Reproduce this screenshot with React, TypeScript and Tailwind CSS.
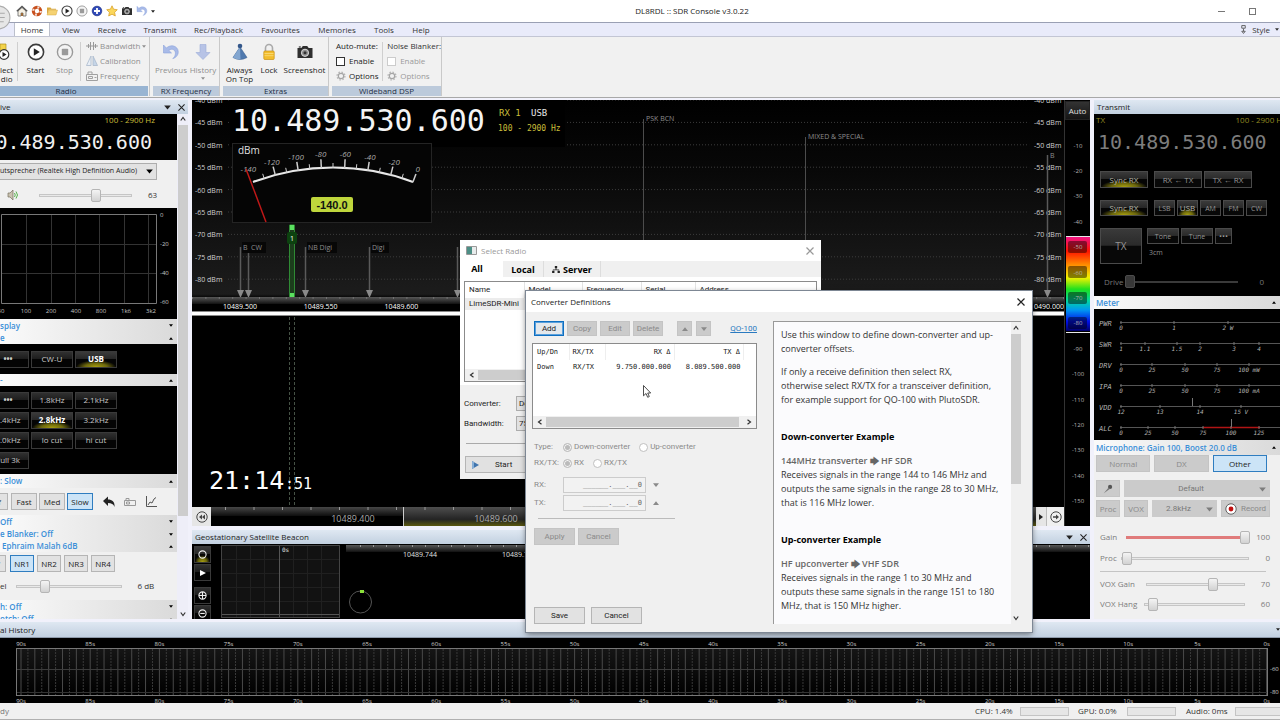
import React from "react";
import clsx from "clsx";

const sans = "[font-family:'Open_Sans','Noto_Sans',sans-serif]";
const narrow = "[font-family:Roboto,'Noto_Sans',sans-serif]";
const mono = "[font-family:'DejaVu_Sans_Mono','Liberation_Mono',monospace]";

/* ---------- icons ---------- */

const HouseIcon = () => (
    <svg viewBox="0 0 12 12" className="size-3">
        <path d="M2 6v5h3V8h2v3h3V6L6 2.5z" fill="#f6f1e4" stroke="#666" strokeWidth=".8" />
        <path d="M.8 6.3 6 1.4l5.2 4.9" fill="none" stroke="#555" strokeWidth="1.4" />
        <path d="M5 8h2v3H5z" fill="#9a6a3a" />
    </svg>
);

const BuoyIcon = () => (
    <svg viewBox="0 0 12 12" className="size-3">
        <circle cx="6" cy="6" r="3.7" fill="none" stroke="#c8501e" strokeWidth="3" />
        <circle cx="6" cy="6" r="3.7" fill="none" stroke="#f3e3da" strokeWidth="2.2" strokeDasharray="1.8 4" />
    </svg>
);

const FolderIcon = () => (
    <svg viewBox="0 0 12 12" className="size-3">
        <path d="M1 2.5h3.5l1 1.2H10v1H3L1 10z" fill="#d9a93f" />
        <path d="M3 5h8.5L10 10H1z" fill="#f5d272" stroke="#d6a848" strokeWidth=".5" />
    </svg>
);

const PlayCircle = ({className = "size-3"}) => (
    <svg viewBox="0 0 18 18" className={className}>
        <circle cx="9" cy="9" r="7.6" fill="#fff" stroke="#3c3c3c" strokeWidth="1.6" />
        <path d="M6.8 5.2v7.6L12.8 9z" fill="#222" />
    </svg>
);

const StopCircle = ({className = "size-3"}) => (
    <svg viewBox="0 0 18 18" className={className}>
        <circle cx="9" cy="9" r="7.6" fill="#f4f4f4" stroke="#9a9a9a" strokeWidth="1.4" />
        <rect x="5.8" y="5.8" width="6.4" height="6.4" rx=".8" fill="#9a9a9a" />
    </svg>
);

const PlusCircle = () => (
    <svg viewBox="0 0 12 12" className="size-3">
        <circle cx="6" cy="6" r="4.8" fill="#2f49b8" stroke="#1d2f86" strokeWidth=".7" />
        <path d="M6 3v6M3 6h6" stroke="#fff" strokeWidth="1.8" />
    </svg>
);

const StarIcon = () => (
    <svg viewBox="0 0 12 12" className="size-3">
        <path d="m6 .8 1.6 3.4 3.7.5-2.7 2.6.7 3.7L6 9.2 2.7 11l.7-3.7L.7 4.7l3.7-.5z" fill="#fbd75b" stroke="#d69a1e" strokeWidth=".7" />
    </svg>
);

const CameraIcon = ({className = "size-3"}) => (
    <svg viewBox="0 0 18 18" className={className}>
        <path d="M1.5 5h3.8l1.5-2h4.4l1.5 2h3.8v10h-15z" fill="#2f2f2f" />
        <circle cx="9" cy="9.8" r="3.6" fill="#8d8d8d" stroke="#ddd" strokeWidth="1" />
        <circle cx="9" cy="9.8" r="1.5" fill="#333" />
        <path d="M2.8 3.4h2v1.2h-2z" fill="#2f2f2f" />
    </svg>
);

const UndoIcon = ({className = "size-3"}) => (
    <svg viewBox="0 0 18 18" className={className}>
        <path d="M1.5 2v8h8L6.8 7.4c3-2.6 7-.6 6.6 3.4-.2 2-1.2 3.6-2.6 4.8 3.6-1 5.8-4 5.4-7.4C15.600 3 9 .8 4.400 5z" fill="#a9bbe8" stroke="#8ba2dc" strokeWidth=".6" />
    </svg>
);

const DownArrowIcon = () => (
    <svg viewBox="0 0 18 18" className="size-[18px]">
        <path d="M6 1.500h6v8h4L9 16.500 2 9.500h4z" fill="#b7c3e6" stroke="#9aabd8" strokeWidth=".6" />
    </svg>
);

const PinIcon = () => (
    <svg viewBox="0 0 18 18" className="size-[18px]">
        <path d="M9 4 16 14.500Q9 18.500 2 14.500z" fill="#4f79ae" stroke="#3b5f90" strokeWidth=".6" />
        <path d="M9 4 9.500 16.500Q5 16.500 2 14.500z" fill="#83a6d0" />
        <circle cx="9" cy="3" r="2.300" fill="#34578a" />
    </svg>
);

const LockIcon = () => (
    <svg viewBox="0 0 18 18" className="size-[18px]">
        <path d="M5.500 9V5a3.500 3.500 0 0 1 7 0v4" fill="none" stroke="#aaa" strokeWidth="1.600" />
        <rect x="3.800" y="8" width="10.400" height="8.500" rx="1" fill="#f2bd2c" stroke="#c98f14" strokeWidth=".7" />
        <path d="M4.500 10.500h9M4.500 12.700h9" stroke="#fbdc7c" strokeWidth=".8" />
    </svg>
);

const GearIcon = () => (
    <svg viewBox="0 0 12 12" className="size-[10px]">
        <circle cx="6" cy="6" r="3.200" fill="none" stroke="#a5a5a5" strokeWidth="1.400" />
        <circle cx="6" cy="6" r="4.700" fill="none" stroke="#b5b5b5" strokeWidth="1.600" strokeDasharray="1.800 1.890" />
    </svg>
);

const BandwidthIcon = () => (
    <svg viewBox="0 0 12 10" className="h-[10px] w-3" fill="none" stroke="#999">
        <path d="M0 5h12M2.500 3v4M4.500 1v8M7.500 1v8M9.500 3v4" />
    </svg>
);

const CalibrationIcon = () => (
    <svg viewBox="0 0 12 10" className="h-[10px] w-3">
        <path d="M5 0v9.500H.5z" fill="#e8eef6" stroke="#a9b9cc" strokeWidth=".8" />
        <path d="M7 0v9.500h4.500z" fill="#c5d5e8" stroke="#a9b9cc" strokeWidth=".8" />
    </svg>
);

const RadioIcon = () => (
    <svg viewBox="0 0 12 10" className="h-[10px] w-3" fill="none" stroke="#a0a0a0">
        <path d="M.5 3.500h11v6H.5zM2 3V1h4v2M2.500 5.500h4v2h-4zM8.500 6.500h2" />
    </svg>
);

const Speaker = () => (
    <svg viewBox="0 0 12 12" className="size-3">
        <path d="M1 4h2l3-3v10L3 8H1z" fill="#c9c2b0" stroke="#77705f" strokeWidth=".7" />
        <path d="M7.500 4q1.500 2 0 4M9 2.500q3 3.500 0 7" fill="none" stroke="#58b34b" />
    </svg>
);

const Triangle = ({up = false, className = ""}) => (
    <svg viewBox="0 0 8 6" className={clsx("h-[5px] w-[7px] shrink-0 fill-current", className)}>
        {up ? <path d="M0 5.500 4 .5l4 5z" /> : <path d="M0 .5h8l-4 5z" />}
    </svg>
);

const Chevron = ({dir = "up"}) => (
    <svg viewBox="0 0 8 8" className="size-[6px]" fill="none" stroke="#333" strokeWidth="1.600">
        {dir === "up" && <path d="m1 6 3-4 3 4" />}
        {dir === "down" && <path d="m1 2 3 4 3-4" />}
        {dir === "left" && <path d="M6 1 2 4l4 3" />}
        {dir === "right" && <path d="m2 1 4 3-4 3" />}
    </svg>
);

const Cross = ({className = "size-[7px]"}) => (
    <svg viewBox="0 0 8 8" className={className} fill="none" stroke="currentColor" strokeWidth="1.200">
        <path d="m.5.5 7 7m0-7-7 7" />
    </svg>
);

/* ---------- shared parts ---------- */

const darkFill = "bg-[linear-gradient(#303030_0%,#1c1c1c_48%,#040404_50%,#040404_100%)]";
const dimFill = "bg-[linear-gradient(#3a3a3a_0%,#2a2a2a_48%,#080808_50%,#080808_100%)]";
const litFill =
    "bg-[radial-gradient(50%_45%_at_50%_100%,#a8a010_0%,#6d680c_55%,transparent_100%),linear-gradient(#3a3a3a_0%,#262626_48%,#050505_50%,#050505_100%)]";

const DarkButton = ({children, on = false, dim = false, className = "h-[17px] w-[42px]"}) => (
    <button
        className={clsx(
            "shrink-0 border text-center leading-none",
            dim ? "border-[#4a4a4a]" : "border-[#3a3a3a]",
            on && litFill,
            !on && (dim ? dimFill : darkFill),
            on && dim && "text-[#b4b4a8]",
            on && !dim && "font-bold text-white",
            !on && (dim ? "text-[#959595]" : "text-[#c8c8c8]"),
            className,
        )}
    >
        {children}
    </button>
);

const GreyButton = ({children, on = false, off = false, className = "h-[17px] w-6"}) => (
    <button
        disabled={off}
        className={clsx(
            "flex shrink-0 items-center justify-center border leading-none",
            on && "border-[#2f7dc0] bg-[#cce4f7] text-[#222]",
            off && "border-[#c4c4c4] bg-[#cbcbcb] text-[#8a8a8a]",
            !on && !off && "border-[#b5b5b5] bg-[#e2e2e2] text-[#222]",
            className,
        )}
    >
        {children}
    </button>
);

const lightRange =
    "h-[14px] min-w-0 appearance-none bg-transparent [&::-webkit-slider-runnable-track]:h-[3px] [&::-webkit-slider-runnable-track]:border [&::-webkit-slider-runnable-track]:border-[#c6c6c6] [&::-webkit-slider-runnable-track]:bg-[#e9e9e9] [&::-webkit-slider-thumb]:mt-[-6px] [&::-webkit-slider-thumb]:h-[13px] [&::-webkit-slider-thumb]:w-[10px] [&::-webkit-slider-thumb]:appearance-none [&::-webkit-slider-thumb]:rounded-xs [&::-webkit-slider-thumb]:border [&::-webkit-slider-thumb]:border-[#b5b5b5] [&::-webkit-slider-thumb]:bg-[linear-gradient(#f4f4f4,#d2d2d2)]";

const redRange =
    "h-[14px] min-w-0 appearance-none bg-transparent [&::-webkit-slider-runnable-track]:h-[3px] [&::-webkit-slider-runnable-track]:bg-[#e07b7b] [&::-webkit-slider-thumb]:mt-[-5px] [&::-webkit-slider-thumb]:h-[13px] [&::-webkit-slider-thumb]:w-[10px] [&::-webkit-slider-thumb]:appearance-none [&::-webkit-slider-thumb]:rounded-xs [&::-webkit-slider-thumb]:border [&::-webkit-slider-thumb]:border-[#b5b5b5] [&::-webkit-slider-thumb]:bg-[linear-gradient(#f4f4f4,#d2d2d2)]";

const darkRange =
    "h-[14px] min-w-0 appearance-none bg-transparent [&::-webkit-slider-runnable-track]:h-[2px] [&::-webkit-slider-runnable-track]:bg-[#3a3a3a] [&::-webkit-slider-thumb]:mt-[-6px] [&::-webkit-slider-thumb]:h-[13px] [&::-webkit-slider-thumb]:w-[10px] [&::-webkit-slider-thumb]:appearance-none [&::-webkit-slider-thumb]:rounded-xs [&::-webkit-slider-thumb]:border [&::-webkit-slider-thumb]:border-[#4c4c4c] [&::-webkit-slider-thumb]:bg-[#383838]";

const PanelHeader = ({title, tools = true, className = "pl-[3px]"}) => (
    <div className={clsx("flex h-[14px] shrink-0 items-center bg-[linear-gradient(#dfe8f2,#c2d0e0)] pr-[3px] text-[#222]", className)}>
        <span className="flex-1">{title}</span>
        {tools && (
            <>
                <Triangle className="mr-[7px]" />
                <Cross />
            </>
        )}
    </div>
);

const SectionHeader = ({title, up = false, className = "h-3"}) => (
    <div className={clsx("flex shrink-0 items-center bg-[linear-gradient(90deg,#fafafa,#dadada)] pr-1 font-semibold text-[#3a8fd8]", className)}>
        <span className="flex-1 whitespace-nowrap">{title}</span>
        <Triangle up={up} className="!h-[3px] !w-1 text-black" />
    </div>
);

/* ---------- title bar and ribbon ---------- */

const TitleBar = () => (
    <div className="relative flex h-[22px] shrink-0 items-center bg-white pl-4 pr-6 text-[#222]">
        <svg viewBox="0 0 24 24" className="absolute left-[-14px] top-[5px] z-10 size-[25px]">
            <circle cx="12" cy="12" r="11" fill="#e6e6e6" stroke="#ababab" />
            <path d="M12 8h6M12 12h6M12 16h5" stroke="#aaa" />
        </svg>
        <div className="flex flex-1 items-center gap-[3px]">
            <HouseIcon />
            <BuoyIcon />
            <FolderIcon />
            <PlayCircle />
            <StopCircle />
            <PlusCircle />
            <StarIcon />
            <CameraIcon />
            <UndoIcon />
            <Triangle className="!h-[3px] !w-1" />
        </div>
        <h1 className="ml-28">DL8RDL :: SDR Console v3.0.22</h1>
        <div className="flex flex-1 items-center justify-end gap-6 text-[#555]">
            <span className="h-px w-[7px] bg-[#777]" />
            <span className="size-[7px] border border-[#777]" />
        </div>
    </div>
);

const tabs = [
    {name: "View", width: "w-[42px]"},
    {name: "Receive", width: "w-[40px]"},
    {name: "Transmit", width: "w-[56px]"},
    {name: "Rec/Playback", width: "w-[61px]"},
    {name: "Favourites", width: "w-[63px]"},
    {name: "Memories", width: "w-[50px]"},
    {name: "Tools", width: "w-[44px]"},
    {name: "Help", width: "w-[30px]"},
];

const TabRow = () => (
    <nav className="flex h-[15px] shrink-0 border-y border-[#c3c6d4] border-t-[#9aa0b4] bg-[#e9ebfa] pl-[14px] text-[#333]">
        <button className="w-9 border-x border-[#bcc0cc] bg-white leading-none">Home</button>
        {tabs.map((tab) => (
            <button key={tab.name} className={clsx("whitespace-nowrap text-center leading-none", tab.width)}>
                {tab.name}
            </button>
        ))}
        <div className="ml-auto flex items-center gap-[5px] pr-[1px]">
            <svg viewBox="0 0 8 10" className="h-[9px] w-[7px]" fill="none" stroke="#555">
                <path d="M2 .5h4v3H2zM4 4v3M2 7h4l-2 2.500z" />
            </svg>
            <span>Style</span>
            <Triangle className="!h-[3px] !w-1" />
        </div>
    </nav>
);

const RibbonGroup = ({title, children, active = false, className}) => (
    <section className={clsx("flex shrink-0 flex-col border-r border-[#c9c9c9]", className)}>
        <div className="flex flex-1">{children}</div>
        <div className={clsx("h-[10px] text-center leading-[10px] text-[#1f2f45]", active ? "bg-[#98b4d2] pr-4" : "bg-[#bccadb]")}>{title}</div>
    </section>
);

const BigButton = ({icon, label, grey = false, className = "w-[29px]"}) => (
    <button className={clsx("flex shrink-0 flex-col items-center gap-[4px] pt-[6px] text-center leading-[9px]", grey && "text-[#8f8f8f]", className)}>
        {icon}
        <span className="whitespace-pre-line">{label}</span>
    </button>
);

const Ribbon = () => (
    <div className="flex h-[61px] shrink-0 gap-[3px] border-b border-[#a8a8a8] bg-[#f1f1f1] pb-[1px] text-[#222]">
        <RibbonGroup title="Radio" active className="w-[150px] pr-px">
            <BigButton
                className="w-4 items-start"
                label={"lect\ndio"}
                icon={
                    <svg viewBox="0 0 12 18" className="h-[18px] w-3">
                        <path d="M0 1h6v7H0z" fill="#f3d34a" stroke="#b08f1d" strokeWidth=".7" />
                        <circle cx="4" cy="11.500" r="4.800" fill="#fff" stroke="#333" strokeWidth="1.200" />
                        <path d="M2.500 9v5l4-2.500z" fill="#222" />
                    </svg>
                }
            />
            <div className="my-[5px] ml-[1px] mr-[3px] border-l border-[#cfcfcf]" />
            <BigButton icon={<PlayCircle className="size-[18px]" />} label="Start" />
            <BigButton icon={<StopCircle className="size-[18px]" />} label="Stop" grey />
            <div className="my-[5px] mr-[5px] ml-[1px] border-l border-[#cfcfcf]" />
            <div className="flex flex-col gap-[5px] pt-[4px] leading-[10px] text-[#8f8f8f]">
                <button className="flex items-center gap-[2px]"><BandwidthIcon />Bandwidth<Triangle className="!h-[3px] !w-1" /></button>
                <button className="flex items-center gap-[2px]"><CalibrationIcon />Calibration</button>
                <button className="flex items-center gap-[2px]"><RadioIcon />Frequency</button>
            </div>
        </RibbonGroup>
        <RibbonGroup title="RX Frequency" className="w-[67px]">
            <BigButton className="w-9" icon={<UndoIcon className="size-[18px]" />} label="Previous" grey />
            <BigButton className="w-[28px]" icon={<DownArrowIcon />} label={<>History<Triangle className="mx-auto mt-[3px] !h-[3px] !w-1" /></>} grey />
        </RibbonGroup>
        <RibbonGroup title="Extras" className="w-[106px]">
            <BigButton className="w-[33px]" icon={<PinIcon />} label={"Always\nOn Top"} />
            <BigButton className="w-[26px]" icon={<LockIcon />} label="Lock" />
            <BigButton className="w-[45px]" icon={<CameraIcon className="size-[18px]" />} label="Screenshot" />
        </RibbonGroup>
        <RibbonGroup title="Wideband DSP" className="w-[110px]">
            <div className="flex w-[51px] flex-col gap-[5px] pl-[4px] pt-[4px] leading-[10px]">
                <span className="whitespace-nowrap">Auto-mute:</span>
                <label className="flex items-center gap-1"><input type="checkbox" className="size-[9px] appearance-none border border-[#333] bg-white" />Enable</label>
                <button className="flex items-center gap-[3px]"><GearIcon />Options</button>
            </div>
            <div className="my-[5px] border-l border-[#cfcfcf]" />
            <div className="flex flex-col gap-[5px] pl-[4px] pt-[4px] leading-[10px] text-[#9a9a9a]">
                <span className="whitespace-nowrap text-[#333]">Noise Blanker:</span>
                <label className="flex items-center gap-1"><input type="checkbox" disabled className="size-[9px] appearance-none border border-[#ccc] bg-white" />Enable</label>
                <button className="flex items-center gap-[3px]"><GearIcon />Options</button>
            </div>
        </RibbonGroup>
    </div>
);

/* ---------- receive panel ---------- */

const AudioScope = () => (
    <svg className="block h-[111px] w-full shrink-0 bg-black text-[6px]" fill="#c8c8c8">
        {[26, 51, 75, 99, 124, 148].map((x) => (
            <path key={x} d={`M${x}.5 6v89`} stroke="#333" />
        ))}
        <path d="M1 36.500h156M1 65.500h156" stroke="#333" />
        <path d="M1.500 6.500h155v89h-155z" fill="none" stroke="#787878" />
        {["0", "-20", "-40", "-60"].map((label, i) => (
            <text key={label} x="160" y={9 + i * 29}>{label}</text>
        ))}
        {["50", "100", "200", "400", "800", "1k6", "3k2"].map((label, i) => (
            <text key={label} x={1 + i * 25} y="105" textAnchor="middle">{label}</text>
        ))}
    </svg>
);

const ReceivePanel = () => (
    <aside className="flex w-[188px] shrink-0 flex-col overflow-hidden">
        <PanelHeader title="ive" className="pl-0" />
        <div className="flex min-h-0 flex-1">
            <div className="flex w-[177px] flex-col overflow-hidden bg-[#f0f0f0]">
                <div className="flex h-[46px] shrink-0 flex-col items-end bg-black">
                    <span className="pr-[22px] leading-[11px] text-[#c9bd3a]">100 - 2900 Hz</span>
                    <span className={clsx("pr-[25px] text-[20px] leading-[34px] text-[#f0f0f0]", mono)}>0.489.530.600</span>
                </div>
                <div className="h-12 shrink-0">
                    <div className="relative mt-[3px] w-[157px]">
                        <select aria-label="Audio device" className="h-[17px] w-full appearance-none border border-l-0 border-[#adadad] bg-[#e2e2e2] text-[7px] text-[#222]">
                            <option>utsprecher (Realtek High Definition Audio)</option>
                        </select>
                        <Triangle className="absolute right-1 top-[6px]" />
                    </div>
                    <div className="mt-[8px] flex items-center pl-[7px] text-[#333]">
                        <Speaker />
                        <input type="range" aria-label="Volume" defaultValue="63" className={clsx("ml-5 w-[93px]", lightRange)} />
                        <span className="ml-4">63</span>
                    </div>
                </div>
                <AudioScope />
                <SectionHeader title="splay" className="h-[13px]" />
                <SectionHeader title="e" up />
                <div className="flex h-[30px] shrink-0 items-center gap-[2px] bg-black">
                    <DarkButton className="ml-[-13px] h-[17px] w-[42px] font-bold">•••</DarkButton>
                    <DarkButton>CW-U</DarkButton>
                    <DarkButton on>USB</DarkButton>
                </div>
                <SectionHeader title="-" up />
                <div className="ml-[-13px] grid h-[88px] shrink-0 grid-cols-[42px_42px_42px] content-center gap-x-[2px] gap-y-[3px] bg-black pr-[51px]">
                    <DarkButton className="h-[17px] w-[42px] font-bold">•••</DarkButton>
                    <DarkButton>1.8kHz</DarkButton>
                    <DarkButton>2.1kHz</DarkButton>
                    <DarkButton>2.4kHz</DarkButton>
                    <DarkButton on>2.8kHz</DarkButton>
                    <DarkButton>3.2kHz</DarkButton>
                    <DarkButton>3.0kHz</DarkButton>
                    <DarkButton>lo cut</DarkButton>
                    <DarkButton>hi cut</DarkButton>
                    <DarkButton>Full 3k</DarkButton>
                </div>
                <SectionHeader title=": Slow" up className="h-[14px]" />
                <div className="flex h-[27px] shrink-0 items-center gap-[2px]">
                    <GreyButton className="ml-[-18px] h-[17px] w-[26px]">Off</GreyButton>
                    <GreyButton className="ml-px h-[17px] w-[26px]">Fast</GreyButton>
                    <GreyButton className="h-[17px] w-[26px]">Med</GreyButton>
                    <GreyButton on className="h-[17px] w-[26px]">Slow</GreyButton>
                    <svg viewBox="0 0 12 12" className="ml-2 size-3"><path d="M0 5 5 .5v3c4 0 7 2 6.500 7.500C10.500 8 8.500 7 5 7v3z" fill="#222" /></svg>
                    <svg viewBox="0 0 12 12" className="ml-[7px] size-3" fill="none" stroke="#999"><path d="M.5 4.500h11v5H.5zM2 4V2.500h3V4M2.500 6h3v2h-3z" /></svg>
                    <svg viewBox="0 0 12 12" className="ml-[7px] size-3" fill="none" stroke="#555"><path d="M1.500 0v10.500H12M3 9l2-3 2 1 2-4 2-1.500" /></svg>
                </div>
                <SectionHeader title="Off" className="h-[13px]" />
                <SectionHeader title="e Blanker: Off" />
                <SectionHeader title="Ephraim Malah 6dB" up className="h-3 pl-[2px]" />
                <div className="h-12 shrink-0">
                    <div className="flex gap-[3px] pt-[3px]">
                        <GreyButton className="ml-[-18px] h-[17px] w-6">Off</GreyButton>
                        <GreyButton on className="ml-px h-[17px] w-6">NR1</GreyButton>
                        <GreyButton>NR2</GreyButton>
                        <GreyButton>NR3</GreyButton>
                        <GreyButton>NR4</GreyButton>
                    </div>
                    <div className="flex items-center pt-[7px] text-[#333]">
                        <label htmlFor="nr-level">el</label>
                        <input id="nr-level" type="range" max="24" defaultValue="6" className={clsx("ml-[9px] w-[106px]", lightRange)} />
                        <span className="ml-4">6 dB</span>
                    </div>
                </div>
                <SectionHeader title="h: Off" className="h-[13px]" />
                <SectionHeader title="otch: Off" up />
            </div>
            <div className="flex flex-1 flex-col items-center gap-[3px] bg-[#eeeef8] py-[2px]">
                <Chevron />
                <div className="w-[10px] flex-[396] bg-[#cdcdcd]" />
                <div className="flex-[90]" />
                <Chevron dir="down" />
            </div>
        </div>
    </aside>
);

/* ---------- spectrum and waterfall ---------- */

const levels = [-40, -45, -50, -55, -60, -65, -70, -75, -80];
const gauge = [-140, -130, -120, -110, -100, -90, -80, -70, -60, -50, -40, -30, -20, -10, 0];

const gaugePoint = (value, radius) => {
    const angle = (((value + 70) / 70) * 20.4 * Math.PI) / 180;
    return {x: 141 + radius * Math.sin(angle), y: 297 - radius * Math.cos(angle)};
};

const Marker = ({x, top}) => (
    <g>
        <path d={`M${x}.5 ${top}V190`} stroke="#5a5a5a" strokeWidth="1.500" />
        <path d={`M${x - 3} 190h7l-3.500 8z`} fill="#8a8a8a" />
    </g>
);

const Spectrum = () => (
    <svg className="block h-[211px] w-full shrink-0 bg-[linear-gradient(#000,#070707_30%,#1c1c1c_92%,#000_94%)] text-[7px]" fill="#d0d0d0">
        <defs>
            <linearGradient id="scale" x2="0" y2="1">
                <stop stopColor="#585858" />
                <stop offset="1" stopColor="#111" />
            </linearGradient>
        </defs>
        {levels.map((level, i) => (
            <g key={level}>
                <line x1="36" x2="96%" y1={i * 22.4} y2={i * 22.4} stroke="#3c3c3c" strokeDasharray="1 2" />
                <text x="3" y={3 + i * 22.4}>{level} dBm</text>
                <text x="99.700%" y={3 + i * 22.4} textAnchor="end">{level} dBm</text>
            </g>
        ))}
        <rect x="38" width="335" height="47" fill="#000" />
        <text x="40" y="31" fontSize="30" fill="#f4f4f4" className={mono}>10.489.530.600</text>
        <g className={mono}>
            <text x="307" y="16" fontSize="9" fill="#c9bd3a">RX 1</text>
            <text x="339" y="16" fontSize="9" fill="#e8e8e8">USB</text>
            <text x="306" y="31" fontSize="8" fill="#c9bd3a">100 - 2900 Hz</text>
        </g>

        <rect x="40.500" y="43.500" width="199" height="79" fill="#050505" stroke="#242424" />
        <text x="46" y="54" fontSize="10" fill="#e0e0e0">dBm</text>
        <path d="M61 82A229 229 0 0 1 221 82" fill="none" stroke="#e8e8e8" strokeWidth="2" />
        {gauge.map((value) => {
            const major = value % 20 === 0;
            const from = gaugePoint(value, 229);
            const to = gaugePoint(value, major ? 238 : 234);
            const text = gaugePoint(value, 243);
            return (
                <g key={value}>
                    {value > -140 && <path d={`M${from.x} ${from.y}L${to.x} ${to.y}`} stroke="#ccc" strokeWidth={major ? 1.5 : 1} />}
                    {major && <text x={text.x} y={text.y + 3} fontSize="8" fontStyle="italic" textAnchor="middle" fill="#aaa">{value}</text>}
                </g>
            );
        })}
        <path d="m54 69 20 53" stroke="#c01818" strokeWidth="1.500" />
        <rect x="119" y="97" width="42" height="15" rx="2" fill="#bfd63c" />
        <text x="140" y="109" fontSize="11" fontWeight="700" textAnchor="middle" fill="#111" className="[font-family:'Liberation_Sans',sans-serif]">-140.0</text>

        <Marker x={48} top={147} />
        <Marker x={56} top={147} />
        <Marker x={113} top={147} />
        <Marker x={177} top={147} />
        <Marker x={265} top={147} />
        <g fill="#070707">
            <path d="M50 142h24v11H50zM115 142h30v11h-30zM179 142h18v11h-18z" />
        </g>
        <g fill="#8d8d8d">
            <text x="51" y="150">B</text>
            <text x="59" y="150">CW</text>
            <text x="116" y="150">NB Digi</text>
            <text x="180" y="150">Digi</text>
            <text x="454" y="21">PSK BCN</text>
            <text x="616" y="39">MIXED &amp; SPECIAL</text>
            <text x="858" y="58">B</text>
        </g>
        <path d="M451.500 19V197M613.500 37V197" stroke="#4c4c4c" />
        <Marker x={855} top={55} />

        <path d="M97.500 125h5v72h-5z" fill="#1c3d1c" stroke="#2f8a34" />
        <path d="M98 125h4v5h-4zM98 193h4v4h-4z" fill="#5be060" />
        <rect x="95" y="132" width="10" height="12" rx="2" fill="#0c420f" />
        <text x="100" y="141" textAnchor="middle" fill="#fff">1</text>

        <rect y="197" width="100%" height="7" fill="url(#scale)" />
        <line x1="0" x2="100%" y1="198" y2="198" stroke="#999" strokeDasharray="1 12.400" />
        {["10489.500", "10489.550", "10489.600", "10489.650", "10489.700", "10489.750", "10489.800", "10489.850", "10489.900", "10489.950", "10490.000"].map((f, i) => (
            <text key={f} x={48 + i * 80.7} y="209" textAnchor="middle" fill="#fff">{f}</text>
        ))}
    </svg>
);

const Waterfall = () => (
    <svg className="block min-h-0 w-full flex-1 bg-black" fill="#fff">
        <line x1="97.500" x2="97.500" y1="1" y2="100%" stroke="#465246" strokeDasharray="3 2" />
        <line x1="102.500" x2="102.500" y1="1" y2="100%" stroke="#465246" strokeDasharray="3 2" />
        <text x="17" y="173" fontSize="25" className={mono}>21:14</text>
        <text x="93" y="173" fontSize="15" className={mono}>:51</text>
    </svg>
);

const BandBar = () => (
    <div className="flex h-[19px] shrink-0 bg-black">
        <button aria-label="Scroll left" className="flex w-[19px] items-center justify-center bg-[#e6e6e6]">
            <svg viewBox="0 0 12 12" className="size-3" fill="none" stroke="#444"><circle cx="6" cy="6" r="5.200" /><path d="M6 3.500v5L3 6zM9 3.500v5L6 6z" fill="#444" stroke="none" /></svg>
        </button>
        <svg className="h-full min-w-0 flex-1 text-[9px]" fill="#a8a8a8">
            <defs>
                <linearGradient id="passband" x2="0" y2="1">
                    <stop stopColor="#4e4e4e" />
                    <stop offset=".65" stopColor="#242424" />
                    <stop offset="1" stopColor="#5a570e" />
                </linearGradient>
            </defs>
            <rect width="192" height="9" fill="url(#scale)" opacity=".8" />
            <rect x="192" width="634" height="19" fill="url(#passband)" />
            <path d="M192.500 0v19" stroke="#ccc" />
            <line x1="14" x2="100%" y1="1.500" y2="1.500" stroke="#999" strokeWidth="3" strokeDasharray="1 27.500" />
            <text x="142" y="15" textAnchor="middle">10489.400</text>
            <text x="285" y="15" textAnchor="middle">10489.600</text>
        </svg>
        <button aria-label="Step right" className="flex w-[10px] items-center justify-center bg-[#e6e6e6]">
            <svg viewBox="0 0 4 6" className="h-[6px] w-1"><path d="M0 0v6l4-3z" fill="#222" /></svg>
        </button>
        <button aria-label="Scroll right" className="flex w-[18px] items-center justify-center border-l border-[#bbb] bg-[#f0f0f0]">
            <svg viewBox="0 0 12 12" className="size-3" fill="none" stroke="#444"><circle cx="6" cy="6" r="5.200" /><path d="M3 6h3" strokeWidth="1.500" /><path d="M6 3.500v5L9 6z" fill="#444" stroke="none" /></svg>
        </button>
    </div>
);

const palette = [-10, -20, -30, -40, -50, -60, -70, -80, -90, -100, -110, -120, -130, -140, -150];

const PaletteColumn = () => (
    <div className="flex w-[26px] shrink-0 flex-col border-l border-[#333] bg-black">
        <button className="mt-[1px] h-[19px] w-full border border-[#222] bg-[linear-gradient(#333,#151515)] leading-none text-[#e0e0e0]">Auto</button>
        <svg className="min-h-0 w-full flex-1 text-[6px]" fill="#b4b4b4">
            <defs>
                <linearGradient id="heat" x2="0" y2="1">
                    <stop stopColor="#f0148c" />
                    <stop offset=".16" stopColor="#ff1400" />
                    <stop offset=".3" stopColor="#ff8a00" />
                    <stop offset=".44" stopColor="#f2f200" />
                    <stop offset=".56" stopColor="#1ee01e" />
                    <stop offset=".68" stopColor="#00d8a0" />
                    <stop offset=".78" stopColor="#0096f0" />
                    <stop offset=".9" stopColor="#0010e8" />
                    <stop offset="1" stopColor="#00006a" />
                </linearGradient>
            </defs>
            <rect x="1" y="116" width="24" height="95" fill="url(#heat)" />
            <path d="M1 116.500h24M1 212.500h24" stroke="#e8e8e8" />
            <g fill="#000" opacity=".45">
                <rect x="3" y="121" width="19" height="12" rx="2" />
                <rect x="3" y="146" width="19" height="12" rx="2" />
                <rect x="3" y="172" width="19" height="12" rx="2" />
                <rect x="3" y="197" width="19" height="12" rx="2" />
            </g>
            {palette.map((level, i) => (
                <text key={level} x="13" y={27.500 + i * 25.4} textAnchor="middle">{level}</text>
            ))}
        </svg>
    </div>
);

const BeaconPanel = () => (
    <section className="flex h-[89px] shrink-0 flex-col">
        <PanelHeader title="Geostationary Satellite Beacon" />
        <div className="flex min-h-0 flex-1 overflow-hidden bg-black">
            <div className="flex flex-col pl-[2px] pt-[2px]">
                <DarkButton on className="h-[17px] w-[17px]"><svg viewBox="0 0 10 10" className="mx-auto size-[9px]" fill="none" stroke="#eee" strokeWidth="1.200"><circle cx="5" cy="5" r="4" /></svg></DarkButton>
                <DarkButton className="mt-px h-[17px] w-[17px]"><svg viewBox="0 0 6 6" className="mx-auto size-[6px]"><path d="M0 0v6l6-3z" fill="#fff" /></svg></DarkButton>
                <DarkButton className="mt-[6px] h-[17px] w-[17px]"><svg viewBox="0 0 10 10" className="mx-auto size-[9px]" fill="none" stroke="#eee" strokeWidth="1.200"><path d="M5 1v8M1 5h8" /><circle cx="5" cy="5" r="4" /></svg></DarkButton>
                <DarkButton className="mt-px h-[17px] w-[17px]"><svg viewBox="0 0 10 10" className="mx-auto size-[9px]" fill="none" stroke="#eee" strokeWidth="1.200"><path d="M2.500 5h5" /><circle cx="5" cy="5" r="4" /></svg></DarkButton>
            </div>
            <svg className="h-full min-w-0 flex-1 text-[7px]" fill="#e0e0e0">
                <rect x="10.500" y="1.500" width="118" height="72" fill="#121212" stroke="#444" />
                <path d="M25.500 2v71M39.500 2v71M53.500 2v71M82.500 2v71M96.500 2v71M110.500 2v71M11 15.500h117M11 29.500h117M11 43.500h117M11 57.500h117" stroke="#202020" />
                <path d="M68.500 2v71M11 70.500h117" stroke="#555" />
                <text x="71" y="8" className={mono} fontSize="6">0s</text>
                <rect x="135" y="1" width="745" height="7" fill="url(#scale)" />
                <line x1="149" x2="880" y1="2" y2="2" stroke="#999" strokeWidth="2" strokeDasharray="1 12" />
                <text x="209" y="13" textAnchor="middle">10489.744</text>
                <text x="308" y="13" textAnchor="middle">10489.745</text>
                <circle cx="149.500" cy="58" r="11" fill="none" stroke="#555" />
                <rect x="149" y="46" width="4" height="3" fill="#8be03a" />
            </svg>
        </div>
    </section>
);

const CenterColumn = () => (
    <main className="flex min-w-0 flex-1 flex-col">
        <div className="flex min-h-0 flex-1">
            <div className="flex min-w-0 flex-1 flex-col">
                <Spectrum />
                <div className="h-[5px] shrink-0 border-y border-[#888] bg-white" />
                <Waterfall />
                <BandBar />
            </div>
            <PaletteColumn />
        </div>
        <div className="h-1 shrink-0" />
        <BeaconPanel />
    </main>
);

/* ---------- transmit panel ---------- */

const meters = [
    {name: "PWR", ticks: [[27, "0"], [80, "1"], [134, "2 W"]]},
    {name: "SWR", ticks: [[27, "1"], [51, "1.1"], [83, "1.5"], [106, "2"], [140, "3"], [165, "4"]]},
    {name: "DRV", ticks: [[27, "0"], [58, "25"], [91, "50"], [123, "75"], [155, "100 mW"]]},
    {name: "IPA", ticks: [[27, "0"], [58, "25"], [91, "50"], [123, "75"], [155, "100 mA"]]},
    {name: "VDD", ticks: [[27, "12"], [66, "13"], [106, "14"], [147, "15 V"]], value: 98},
    {name: "ALC", ticks: [[27, "0"], [54, "25"], [81, "50"], [109, "75"], [137, "100"], [165, "125"]], value: 137},
];

const Meters = () => (
    <svg className={clsx("block h-[131px] w-full shrink-0 bg-black text-[6px] italic", mono)} fill="#b0b0b0">
        {meters.map((meter, i) => (
            <g key={meter.name} transform={`translate(0 ${13 + i * 21})`}>
                <text x="5" y="4" fontSize="7">{meter.name}</text>
                <line x1="26" x2="100%" y1=".5" y2=".5" stroke="#555" />
                {meter.name === "ALC" && <path d="M109 .5h57" stroke="#b01414" strokeWidth="1.500" />}
                {meter.value && <path d={`M${meter.value}.5-8V0`} stroke="#777" />}
                {meter.ticks.map(([x, label]) => (
                    <g key={label}>
                        <path d={`M${x}-1v3`} stroke="#777" />
                        <text x={x} y="8" textAnchor="middle">{label}</text>
                    </g>
                ))}
            </g>
        ))}
    </svg>
);

const TransmitPanel = () => (
    <aside className="flex w-[186px] shrink-0 flex-col overflow-hidden">
        <PanelHeader title="Transmit" tools={false} />
        <div className="flex h-[182px] shrink-0 flex-col bg-black text-[#8b8b8b]">
            <div className="flex justify-between whitespace-nowrap pl-[2px] leading-[11px] text-[#928920]">
                <span>TX</span>
                <span className="mr-[-6px]">100 - 2900 Hz</span>
            </div>
            <span className={clsx("pl-[4px] text-[20px] leading-[34px] text-[#7d7d7d]", mono)}>10.489.530.600</span>
            <div className="mt-[12px] flex gap-[2px] pl-[6px]">
                <DarkButton dim on className="mr-1 h-[17px] w-12">Sync RX</DarkButton>
                <DarkButton dim className="h-[17px] w-12">RX ← TX</DarkButton>
                <DarkButton dim className="h-[17px] w-12">TX ← RX</DarkButton>
            </div>
            <div className="mt-[12px] flex gap-[2px] pl-[6px]">
                <DarkButton dim on className="mr-1 h-4 w-12">Sync RX</DarkButton>
                <DarkButton dim className="h-4 w-[21px] text-[7px]">LSB</DarkButton>
                <DarkButton dim on className="h-4 w-[21px]">USB</DarkButton>
                <DarkButton dim className="h-4 w-[21px] text-[7px]">AM</DarkButton>
                <DarkButton dim className="h-4 w-[21px] text-[7px]">FM</DarkButton>
                <DarkButton dim className="h-4 w-[21px] text-[7px]">CW</DarkButton>
            </div>
            <div className="mt-[12px] flex pl-[6px]">
                <DarkButton dim className="h-9 w-[42px] text-[10px]">TX</DarkButton>
                <div className="pl-[5px]">
                    <div className="flex gap-[2px]">
                        <DarkButton dim className="h-4 w-8 text-[7px]">Tone</DarkButton>
                        <DarkButton dim className="h-4 w-8 text-[7px]">Tune</DarkButton>
                        <DarkButton dim className="h-4 w-[17px]">•••</DarkButton>
                    </div>
                    <span className="block pl-[2px] pt-1 text-[7px]">3cm</span>
                </div>
            </div>
            <div className="mt-[11px] flex items-center pl-[10px] text-[#777]">
                <label htmlFor="drive" className="w-[20px]">Drive</label>
                <input id="drive" type="range" defaultValue="0" className={clsx("ml-[1px] w-[113px]", darkRange)} />
                <span className="ml-auto pr-4">0</span>
            </div>
        </div>
        <SectionHeader title="Meter" up className="h-[13px] pl-[2px]" />
        <Meters />
        <SectionHeader title="Microphone: Gain 100, Boost 20.0 dB" up className="h-[15px] pl-[2px]" />
        <div className="flex min-h-0 flex-1 flex-col bg-[#f0f0f0] pl-[2px] pr-[10px] text-[#7c7c7c]">
            <div className="flex gap-1 pr-[3px]">
                <GreyButton off className="h-[17px] flex-1">Normal</GreyButton>
                <GreyButton off className="h-[17px] flex-1">DX</GreyButton>
                <GreyButton on className="h-[17px] flex-1">Other</GreyButton>
            </div>
            <div className="mt-2 flex gap-1">
                <GreyButton off><svg viewBox="0 0 12 12" className="size-[10px]"><circle cx="8.500" cy="3.500" r="2.500" fill="#555" /><path d="m1 11 5.500-6.500L8 6z" fill="#777" /></svg></GreyButton>
                <div className="relative flex-1">
                    <select disabled aria-label="Microphone profile" className={clsx("h-[17px] w-full appearance-none bg-[#cbcbcb] pr-3 text-center text-[#777]", narrow)}>
                        <option>Default</option>
                    </select>
                    <Triangle className="absolute right-1 top-[7px]" />
                </div>
            </div>
            <div className="mt-[3px] flex gap-1">
                <GreyButton off>Proc</GreyButton>
                <GreyButton off>VOX</GreyButton>
                <div className="relative flex-1">
                    <select disabled aria-label="Microphone bandwidth" className={clsx("h-[17px] w-full appearance-none bg-[#cbcbcb] pr-3 text-center text-[#777]", narrow)}>
                        <option>2.8kHz</option>
                    </select>
                    <Triangle className="absolute right-1 top-[7px]" />
                </div>
                <GreyButton off className="h-[17px] w-[49px] gap-1">
                    <svg viewBox="0 0 12 12" className="size-3 shrink-0"><circle cx="6" cy="6" r="5.200" fill="#fff" stroke="#444" strokeWidth=".8" /><circle cx="6" cy="6" r="2.400" fill="#c01010" /></svg>
                    <span className={narrow}>Record</span>
                </GreyButton>
            </div>
            <div className="mt-[13px] flex items-center pl-1">
                <label htmlFor="gain" className="w-[26px]">Gain</label>
                <input id="gain" type="range" defaultValue="100" className={clsx("w-[124px]", redRange)} />
                <span className="ml-auto">100</span>
            </div>
            <div className="mt-[7px] flex items-center pl-1">
                <label htmlFor="proc" className="w-[21px]">Proc</label>
                <input id="proc" type="range" defaultValue="0" className={clsx("w-[128px]", lightRange)} />
                <span className="ml-auto">0</span>
            </div>
            <div className="ml-1 mr-1 mt-[6px] border-t border-[#c4c4c4]" />
            <div className="mt-[5px] flex items-center pl-1">
                <label htmlFor="vox-gain" className="w-[46px]">VOX Gain</label>
                <input id="vox-gain" type="range" defaultValue="70" className={clsx("w-[99px]", lightRange)} />
                <span className="ml-auto">70</span>
            </div>
            <div className="mt-[6px] flex items-center pl-1">
                <label htmlFor="vox-hang" className="w-[44px]">VOX Hang</label>
                <input id="vox-hang" type="range" max="2000" defaultValue="60" className={clsx("w-[101px]", lightRange)} />
                <span className="ml-auto">60</span>
            </div>
        </div>
    </aside>
);

/* ---------- history and status ---------- */

const percent = (x) => `${(x / 1280) * 100}%`;

const SignalHistory = () => (
    <section className="shrink-0">
        <div className="flex h-4 items-center border-b border-[#8e9aaa] bg-[linear-gradient(#dfe8f2,#c2d0e0)] text-[#222]">
            <span className="flex-1">al History</span>
            <Triangle className="!h-[3px] !w-1" />
        </div>
        <svg className="block h-[65px] w-full bg-black text-[6px]" fill="#d0d0d0">
            <defs>
                <linearGradient id="history" x2="0" y2="1">
                    <stop stopColor="#161616" />
                    <stop offset="1" stopColor="#000" />
                </linearGradient>
            </defs>
            <rect x="16" y="10" width={percent(1252)} height="47" fill="url(#history)" />
            {Array.from({length: 181}, (_, i) => (
                <line
                    key={i}
                    x1={percent(21 + i * 6.92)}
                    x2={percent(21 + i * 6.92)}
                    y1="11"
                    y2="57"
                    stroke={i % 2 ? "#3a3a3a" : "#4a4a4a"}
                    strokeDasharray={i % 2 ? "2 1" : undefined}
                />
            ))}
            <line x1="16" x2={percent(1268)} y1="31.500" y2="31.500" stroke="#3c3c3c" />
            <line x1="16" x2={percent(1268)} y1="54.500" y2="54.500" stroke="#333" />
            <rect x="16.500" y="10.500" width={percent(1251)} height="47" fill="none" stroke="#777" />
            {Array.from({length: 19}, (_, i) => (
                <g key={i} textAnchor="middle">
                    <text x={percent(21 + i * 69.2)} y="8">{90 - i * 5}s</text>
                    <text x={percent(21 + i * 69.2)} y="65">{90 - i * 5}s</text>
                </g>
            ))}
            <text x={percent(1270)} y="33">-60</text>
            <text x={percent(1270)} y="56">-80</text>
        </svg>
    </section>
);

const StatusBar = () => (
    <footer className="flex h-[17px] shrink-0 items-center border-b border-[#b0b0b0] bg-[#f0f0f0] text-[#333]">
        <span className="flex-1 text-[#777]">dy</span>
        <span className="w-[45px]">CPU: 1.4%</span>
        <span className="mr-[9px] h-[9px] w-[49px] border border-[#c4c4c4] bg-[#e6e6e6]" />
        <span className="w-[49px]">GPU: 0.0%</span>
        <span className="mr-[10px] h-[9px] w-[49px] border border-[#c4c4c4] bg-[#e6e6e6]" />
        <span className="w-[49px]">Audio: 0ms</span>
        <span className="h-[9px] w-[45px] border border-r-0 border-[#c4c4c4] bg-[#e6e6e6]" />
    </footer>
);

/* ---------- dialogs ---------- */

const SelectRadioDialog = () => (
    <div role="dialog" aria-label="Select Radio" className={clsx("absolute left-[460px] top-[240px] flex h-[239px] w-[361px] flex-col bg-[#f0f0f0] text-[#222]", narrow)}>
        <div className={clsx("flex h-[21px] shrink-0 items-center gap-1 bg-white pl-[6px] pr-[7px] text-[#999]", sans)}>
            <svg viewBox="0 0 11 9" className="h-[9px] w-[11px]"><path d="M.5.5h10v8H.5z" fill="#e8ecec" stroke="#999" /><path d="M1 1h5v7H1z" fill="#4d8f86" /></svg>
            <span className="flex-1">Select Radio</span>
            <Cross className="size-2 text-[#999]" />
        </div>
        <div className={clsx("flex h-4 shrink-0 text-[9px] font-bold text-black", sans)}>
            <button className="w-[43px] bg-white pb-[2px] pr-[9px] leading-none">All</button>
            <button className="w-[41px] border-r border-[#ddd] leading-none">Local</button>
            <button className="flex w-[57px] items-center justify-center gap-[3px] border-r border-[#ddd] leading-none">
                <svg viewBox="0 0 10 9" className="h-[7px] w-2" fill="#222"><path d="M3.500 0h3v3h-3zM0 6h3v3H0zM7 6h3v3H7zM1 4.500h8v1H1zM4.500 3h1v2h-1z" /></svg>
                Server
            </button>
        </div>
        <div className="bg-white px-1 pb-[3px] pt-1">
            <div className="flex h-[101px] flex-col border border-[#8b8b8b]">
                <table className="w-full table-fixed text-left">
                    <thead>
                        <tr className="h-4">
                            <th className="w-[59px] pl-1 font-normal">Name</th>
                            <th className="w-[58px] border-l border-[#e3e3e3] pl-1 font-normal">Model</th>
                            <th className="w-[59px] border-l border-[#e3e3e3] pl-1 font-normal">Frequency</th>
                            <th className="w-[54px] border-l border-[#e3e3e3] pl-1 font-normal">Serial</th>
                            <th className="border-l border-[#e3e3e3] pl-1 font-normal">Address</th>
                        </tr>
                    </thead>
                    <tbody>
                        <tr className="h-3 bg-[#ececec]">
                            <td colSpan={5} className="pl-1">LimeSDR-Mini</td>
                        </tr>
                    </tbody>
                </table>
                <div className="mt-auto flex h-3 items-center gap-[3px] bg-[#f0f0f0] pl-1">
                    <Chevron dir="left" />
                    <div className="h-[10px] flex-1 bg-[#cdcdcd]" />
                </div>
            </div>
        </div>
        <div className="flex flex-col gap-[5px] px-1 pt-[11px]">
            <div className="flex items-center">
                <label htmlFor="converter" className="w-[52px]">Converter:</label>
                <select id="converter" className="h-[15px] w-[120px] appearance-none border border-[#adadad] bg-[#e2e2e2] pl-[2px]"><option>Down</option></select>
            </div>
            <div className="flex items-center">
                <label htmlFor="bandwidth" className="w-[52px]">Bandwidth:</label>
                <select id="bandwidth" className="h-[15px] w-[120px] appearance-none border border-[#adadad] bg-[#e2e2e2] pl-[2px]"><option>750 kHz</option></select>
            </div>
        </div>
        <div className="mx-[6px] mt-3 border-t border-[#aaa]" />
        <button className="ml-[5px] mt-[12px] flex h-[17px] w-[74px] shrink-0 items-center border border-[#b5b5b5] bg-[#e1e1e1] pl-[6px]">
            <svg viewBox="0 0 7 8" className="h-2 w-[7px]"><path d="M0 0v8l7-4z" fill="#3f74ad" /><path d="M0 0v8l2-1V1z" fill="#86aed6" /></svg>
            <span className="ml-4">Start</span>
        </button>
    </div>
);

const RadioOption = ({name, label, checked = false}) => (
    <label className="flex items-center gap-[2px] whitespace-nowrap">
        <input type="radio" name={name} defaultChecked={checked} disabled className="size-[9px] appearance-none rounded-full border border-[#c0c0c0] bg-white checked:bg-[#bbb] checked:shadow-[inset_0_0_0_1px_#f6f6f6]" />
        {label}
    </label>
);

const HelpText = () => (
    <article className={clsx("min-w-0 flex-1 whitespace-nowrap px-[7px] pt-[6px] text-[9px] leading-[14px] text-[#333]", sans)}>
        <p>Use this window to define down-converter and up-<br />converter offsets.</p>
        <p className="mt-[9px]">If only a receive definition then select RX,<br />otherwise select RX/TX for a transceiver definition,<br />for example support for QO-100 with PlutoSDR.</p>
        <h2 className="mt-[23px] font-bold text-black">Down-converter Example</h2>
        <h3 className="mt-[10px] font-semibold text-[#666]">144MHz transverter 🡆 HF SDR</h3>
        <p>Receives signals in the range 144 to 146 MHz and<br />outputs the same signals in the range 28 to 30 MHz,<br />that is 116 MHz lower.</p>
        <h2 className="mt-[23px] font-bold text-black">Up-converter Example</h2>
        <h3 className="mt-[10px] font-semibold text-[#666]">HF upconverter 🡆 VHF SDR</h3>
        <p>Receives signals in the range 1 to 30 MHz and<br />outputs these same signals in the range 151 to 180<br />MHz, that is 150 MHz higher.</p>
    </article>
);

const ConverterDialog = () => (
    <div role="dialog" aria-label="Converter Definitions" className={clsx("absolute left-[526px] top-[291px] flex h-[341px] w-[506px] flex-col bg-[#f0f0f0] text-[#222] shadow-[0_0_0_1px_#7d8794,0_2px_6px_#0008]", narrow)}>
        <div className={clsx("flex h-[21px] shrink-0 items-center bg-white pl-[5px] pr-[7px]", sans)}>
            <span className="flex-1">Converter Definitions</span>
            <Cross className="size-2" />
        </div>
        <div className="flex min-h-0 flex-1 gap-4 pb-2 pl-[6px] pr-[11px] pt-[9px]">
            <div className="flex w-[225px] shrink-0 flex-col">
                <div className="flex items-center gap-[3px] pl-[2px]">
                    <button className="h-[15px] w-[30px] border border-[#0f6fc0] bg-[#e4e8ec] leading-none shadow-[inset_0_0_0_1px_#5aa0dc]">Add</button>
                    <GreyButton off className="h-[15px] w-[30px]">Copy</GreyButton>
                    <GreyButton off className="h-[15px] w-[30px]">Edit</GreyButton>
                    <GreyButton off className="h-[15px] w-[30px]">Delete</GreyButton>
                    <GreyButton off className="ml-[11px] h-[15px] w-[15px]"><Triangle up className="!h-[6px] !w-[6px]" /></GreyButton>
                    <GreyButton off className="ml-[1px] h-[15px] w-[15px]"><Triangle className="!h-[6px] !w-[6px]" /></GreyButton>
                    <a href="#" className="ml-auto text-[#2a7ac0] underline">QO-100</a>
                </div>
                <div className="mt-[7px] flex h-[86px] shrink-0 flex-col border border-[#8b8b8b] bg-white">
                    <table className={clsx("w-[211px] table-fixed text-left text-[7px]", mono)}>
                        <thead>
                            <tr className="h-4">
                                <th className="w-9 pl-1 font-normal">Up/Dn</th>
                                <th className="w-9 border-l border-[#eee] pl-[3px] font-normal">RX/TX</th>
                                <th className="w-[69px] border-l border-[#eee] pr-[3px] text-right font-normal">RX Δ</th>
                                <th className="border-x border-[#eee] pr-[3px] text-right font-normal">TX Δ</th>
                            </tr>
                        </thead>
                        <tbody>
                            <tr className="h-[14px]">
                                <td className="pl-1">Down</td>
                                <td className="pl-1">RX/TX</td>
                                <td className="pr-[3px] text-right">9.750.000.000</td>
                                <td className="pr-[3px] text-right">8.089.500.000</td>
                            </tr>
                        </tbody>
                    </table>
                    <div className="mt-auto flex h-3 items-center gap-[3px] bg-[#f0f0f0] px-1">
                        <Chevron dir="left" />
                        <div className="mr-[4px] h-[10px] flex-1 bg-[#cdcdcd]" />
                        <Chevron dir="right" />
                    </div>
                </div>
                <div className="flex flex-col gap-[4px] pl-[2px] pt-[12px] text-[#8a8a8a]">
                    <div className="flex h-3 items-center gap-[9px]">
                        <span className="w-5">Type:</span>
                        <RadioOption name="type" label="Down-converter" checked />
                        <RadioOption name="type" label="Up-converter" />
                    </div>
                    <div className="flex h-3 items-center gap-[9px]">
                        <span className="w-5 whitespace-nowrap">RX/TX:</span>
                        <RadioOption name="direction" label="RX" checked />
                        <RadioOption name="direction" label="RX/TX" />
                    </div>
                </div>
                <div className="flex flex-col gap-[2px] pl-[2px] pt-[8px] text-[#8a8a8a]">
                    <div className="flex items-center">
                        <label htmlFor="rx" className="w-[29px]">RX:</label>
                        <input id="rx" disabled defaultValue="______.___.__0" className={clsx("h-4 w-[83px] border border-[#ccc] bg-[#f2f2f2] px-[3px] text-right text-[7px] text-[#666]", mono)} />
                        <Triangle className="ml-[7px] !h-[6px] !w-[6px]" />
                    </div>
                    <div className="flex items-center">
                        <label htmlFor="tx" className="w-[29px]">TX:</label>
                        <input id="tx" disabled defaultValue="______.___.__0" className={clsx("h-4 w-[83px] border border-[#ccc] bg-[#f2f2f2] px-[3px] text-right text-[7px] text-[#666]", mono)} />
                        <Triangle up className="ml-[7px] !h-[6px] !w-[6px]" />
                    </div>
                </div>
                <div className="ml-[6px] mt-[7px] w-[137px] border-t border-[#bbb]" />
                <div className="mt-[9px] flex gap-[3px] pl-[2px]">
                    <GreyButton off className="h-[17px] w-[41px]">Apply</GreyButton>
                    <GreyButton off className="h-[17px] w-[41px]">Cancel</GreyButton>
                </div>
                <div className="mt-auto flex gap-[6px] pl-[2px]">
                    <GreyButton className="h-[17px] w-[51px]">Save</GreyButton>
                    <GreyButton className="h-[17px] w-[51px]">Cancel</GreyButton>
                </div>
            </div>
            <div className="flex min-w-0 flex-1 border-l border-t border-[#999] bg-[#fbfbfd]">
                <HelpText />
                <div className="flex w-[10px] shrink-0 flex-col items-center gap-[3px] bg-[#f0f0f0] py-[3px]">
                    <Chevron />
                    <div className="w-full flex-[152] bg-[#cdcdcd]" />
                    <div className="flex-[126]" />
                    <Chevron dir="down" />
                </div>
            </div>
        </div>
        <svg viewBox="0 0 8 13" className="absolute left-[117px] top-[94px] h-[13px] w-2">
            <path d="M.5.5v10.300L3 8.500l1.700 3.800 1.600-.8L4.700 8h3z" fill="#fff" stroke="#222" strokeWidth=".8" />
        </svg>
    </div>
);

const App = () => (
    <div className={clsx("relative flex h-screen flex-col overflow-hidden bg-[#f1f1fb] text-[8px]", sans)}>
        <TitleBar />
        <TabRow />
        <Ribbon />
        <div className="mt-[2px] flex min-h-0 flex-1 gap-1">
            <ReceivePanel />
            <CenterColumn />
            <TransmitPanel />
        </div>
        <div className="h-[3px] shrink-0" />
        <SignalHistory />
        <StatusBar />
        <SelectRadioDialog />
        <ConverterDialog />
    </div>
);

export default App;
